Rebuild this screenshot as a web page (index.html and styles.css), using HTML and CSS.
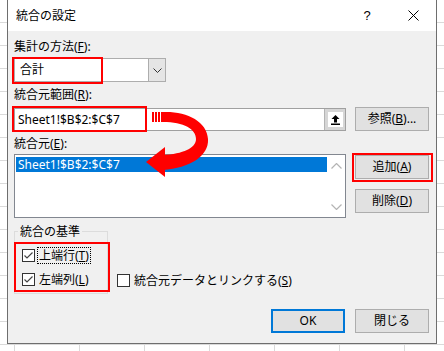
FILE: index.html
```html
<!DOCTYPE html>
<html>
  <head>
    <meta charset="utf-8">
    <title>統合の設定</title>
    <link rel="stylesheet" href="styles.css">
  </head>
  <body>
    <div class="dialog">
      <div class="titlebar">
        <span class="title">統合の設定</span>
        <span class="tb-btn help">?</span>
        <span class="tb-btn close">
          <svg width="11" height="11" viewBox="0 0 11 11"><path d="M0.5 0.5 L10.5 10.5 M10.5 0.5 L0.5 10.5" stroke="#000" stroke-width="1"/></svg>
        </span>
      </div>
      <div class="content">
        <div class="label">集計の方法(<u>F</u>):</div>
        <div class="combo">
          <span class="combo-text">合計</span>
          <span class="combo-btn">
            <svg width="9" height="5" viewBox="0 0 9 5"><path d="M0.5 0.5 L4.5 4.5 L8.5 0.5" fill="none" stroke="#333" stroke-width="1"/></svg>
          </span>
        </div>

        <div class="label">統合元範囲(<u>R</u>):</div>
        <div class="row">
          <div class="refedit">
            <span class="ref-text">Sheet1!$B$2:$C$7</span>
            <span class="ref-btn">
              <span class="ref-icon">
                <svg width="11" height="11" viewBox="0 0 11 11"><path d="M5.5 1 L1.5 5 L4 5 L4 8.5 L7 8.5 L7 5 L9.5 5 Z" fill="#000"/><rect x="1" y="9.5" width="9" height="1.5" fill="#000"/></svg>
              </span>
            </span>
          </div>
          <button class="btn">参照(<u>B</u>)...</button>
        </div>

        <div class="label">統合元(<u>E</u>):</div>
        <div class="row list-row">
          <div class="listbox">
            <div class="list-items">
              <div class="item selected">Sheet1!$B$2:$C$7</div>
            </div>
            <div class="scroll">
              <svg width="11" height="6" viewBox="0 0 11 6"><path d="M0.5 5.5 L5.5 0.5 L10.5 5.5" fill="none" stroke="#b4b4b4" stroke-width="1.2"/></svg>
              <svg width="11" height="6" viewBox="0 0 11 6"><path d="M0.5 0.5 L5.5 5.5 L10.5 0.5" fill="none" stroke="#b4b4b4" stroke-width="1.2"/></svg>
            </div>
          </div>
          <div class="side-btns">
            <button class="btn">追加(<u>A</u>)</button>
            <button class="btn">削除(<u>D</u>)</button>
          </div>
        </div>

        <div class="row options">
          <div class="group">
            <div class="group-title">統合の基準</div>
            <div class="check first">
              <span class="box"><svg width="11" height="11" viewBox="0 0 11 11"><path d="M1.5 5.5 L4 8 L9.5 2.5" fill="none" stroke="#444" stroke-width="1.2"/></svg></span>
              <span class="check-label focus">上端行(<u>T</u>)</span>
            </div>
            <div class="check">
              <span class="box"><svg width="11" height="11" viewBox="0 0 11 11"><path d="M1.5 5.5 L4 8 L9.5 2.5" fill="none" stroke="#444" stroke-width="1.2"/></svg></span>
              <span class="check-label">左端列(<u>L</u>)</span>
            </div>
          </div>
          <div class="check link">
            <span class="box"></span>
            <span class="check-label">統合元データとリンクする(<u>S</u>)</span>
          </div>
        </div>

        <div class="footer">
          <button class="btn ok">OK</button>
          <button class="btn">閉じる</button>
        </div>
      </div>
    </div>

    <!-- red annotations drawn over the dialog -->
    <div class="mark mark-combo"></div>
    <div class="mark mark-ref"></div>
    <div class="mark mark-add"></div>
    <div class="mark mark-checks"></div>
    <svg class="arrow" width="75" height="78" viewBox="140 105 75 78">
      <rect x="152" y="112" width="2" height="10" fill="#f00"/>
      <rect x="155" y="112" width="2" height="10" fill="#f00"/>
      <rect x="158" y="112" width="2" height="10" fill="#f00"/>
      <rect x="161" y="112" width="3" height="10" fill="#f00"/>
      <path d="M163,112 C186,111 207,121 208,139 C209,156 190,168 163,170 L163,155 C183,154 196,148 196,139 C196,129 184,122 163,122 Z" fill="#f00"/>
      <path d="M146,162 L165,147 L165,177 Z" fill="#f00"/>
    </svg>
  </body>
</html>
```

FILE: styles.css
```css
html, body {
  margin: 0;
  padding: 0;
}
body {
  position: relative;
  width: 444px;
  height: 351px;
  overflow: hidden;
  background-color: #fff;
  background-image: linear-gradient(to right, #dadada 1px, transparent 1px),
                    linear-gradient(to bottom, #dadada 1px, transparent 1px);
  background-size: 65px 23px;
  background-position: 14px 22px;
  font-family: "Noto Sans", "Noto Sans CJK JP", sans-serif;
  font-size: 12px;
  color: #000;
}
u {
  text-decoration: underline;
  text-underline-offset: 1px;
}
.dialog {
  margin-left: 7px;
  width: 428px;
  height: 343px;
  border: 1px solid #6e6e6e;
  border-top: 0;
  background: #f0f0f0;
  display: flex;
  flex-direction: column;
}
.titlebar {
  height: 31px;
  background: #fff;
  display: flex;
  align-items: center;
  padding-left: 8px;
}
.title {
  flex: 1;
  line-height: 16px;
}
.tb-btn {
  width: 46px;
  height: 31px;
  display: flex;
  align-items: center;
  justify-content: center;
  font-family: "Liberation Sans", sans-serif;
  font-size: 13px;
}
.content {
  padding: 0 7px 0 6px;
}
.label {
  line-height: 16px;
  margin-top: 8px;
}
.label + .combo {
  margin-top: 3px;
}
.combo {
  width: 150px;
  height: 22px;
  border: 1px solid #adadad;
  background: #fff;
  display: flex;
}
.combo-text {
  flex: 1;
  padding-left: 5px;
  line-height: 22px;
}
.combo-btn {
  width: 16px;
  background: #e5e5e5;
  border-left: 1px solid #adadad;
  display: flex;
  align-items: center;
  justify-content: center;
}
.combo + .label {
  margin-top: 5px;
}
.row {
  display: flex;
  align-items: center;
  justify-content: space-between;
  margin-top: 4px;
}
.refedit {
  width: 330px;
  height: 21px;
  border: 1px solid #a0a0a0;
  background: #fff;
  display: flex;
}
.ref-text {
  flex: 1;
  padding-left: 3px;
  line-height: 21px;
}
.ref-btn {
  width: 20px;
  background: #d6d6d6;
  border-left: 1px solid #b4b4b4;
  display: flex;
  align-items: center;
  justify-content: center;
}
.ref-icon {
  width: 15px;
  height: 15px;
  background: #fff;
  display: flex;
  align-items: center;
  justify-content: center;
}
.btn {
  width: 74px;
  height: 24px;
  padding: 0;
  border: 1px solid #adadad;
  background: #e1e1e1;
  font-family: inherit;
  font-size: 12px;
  line-height: 20px;
  color: #000;
}
.row + .label {
  margin-top: 5px;
}
.list-row {
  align-items: flex-start;
  margin-top: 2px;
}
.listbox {
  width: 330px;
  height: 62px;
  border: 1px solid #828790;
  background: #fff;
  display: flex;
}
.list-items {
  flex: 1;
  padding: 2px 0 0 1px;
}
.item {
  height: 15px;
  line-height: 15px;
  padding-left: 2px;
}
.item.selected {
  background: #0078d7;
  color: #fff;
}
.scroll {
  width: 18px;
  display: flex;
  flex-direction: column;
  justify-content: space-between;
  align-items: center;
  padding: 8px 0 7px;
}
.side-btns {
  display: flex;
  flex-direction: column;
  gap: 10px;
  margin-top: 1px;
}
.options {
  align-items: flex-end;
  justify-content: flex-start;
  margin-top: 13px;
}
.group {
  width: 92px;
  height: 61px;
  border: 1px solid #dcdcdc;
}
.group-title {
  width: fit-content;
  margin: -8px 0 0 3px;
  padding: 0 2px;
  background: #f0f0f0;
  line-height: 16px;
}
.check {
  display: flex;
  align-items: center;
  height: 17px;
}
.group .check {
  margin: 7px 0 0 7px;
}
.check.first {
  margin-top: 7px;
}
.box {
  width: 11px;
  height: 11px;
  border: 1px solid #333;
  background: #fff;
  display: flex;
}
.check-label {
  margin-left: 2px;
  padding: 0 1px;
  border: 1px dotted transparent;
  line-height: 15px;
}
.check-label.focus {
  border-color: #000;
}
.check.link {
  margin: 0 0 5px 9px;
}
.footer {
  display: flex;
  justify-content: flex-end;
  gap: 10px;
  margin-top: 15px;
}
.btn.ok {
  border: 2px solid #0078d7;
}
.mark {
  position: absolute;
  border: 2px solid #f00;
  box-sizing: border-box;
}
.mark-combo {
  left: 12px;
  top: 57px;
  width: 91px;
  height: 27px;
}
.mark-ref {
  left: 12px;
  top: 106px;
  width: 135px;
  height: 26px;
}
.mark-add {
  left: 352px;
  top: 153px;
  width: 81px;
  height: 29px;
}
.mark-checks {
  left: 14px;
  top: 242px;
  width: 96px;
  height: 50px;
}
.arrow {
  position: absolute;
  left: 140px;
  top: 105px;
}
```
